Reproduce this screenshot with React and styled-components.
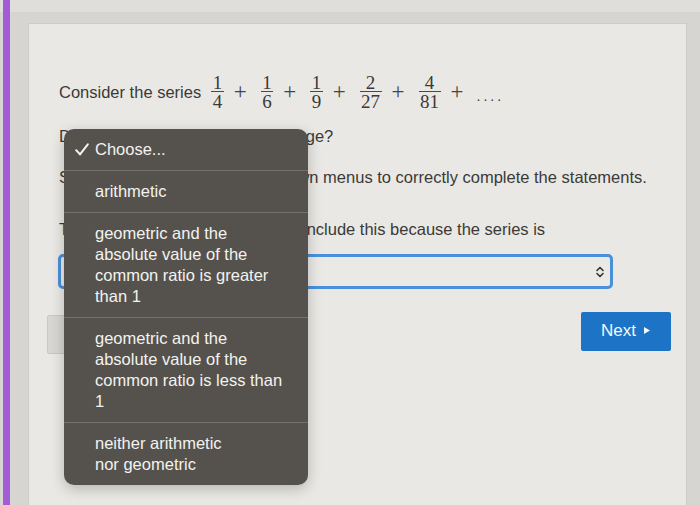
import React from "react";
import styled, { createGlobalStyle } from "styled-components";

const GlobalStyle = createGlobalStyle`
  html, body {
    margin: 0;
    padding: 0;
  }
  body {
    font-family: "Liberation Sans", Arial, Helvetica, sans-serif;
    background: #d5d4d0;
    color: #3b3a38;
  }
`;

const Page = styled.div`
  display: flex;
  height: 505px;
  overflow: hidden;
  background: linear-gradient(#dfdeda 0, #dfdeda 12px, #d6d5d1 12px, #d6d5d1 100%);
`;

const Stripe = styled.div`
  flex-shrink: 0;
  width: 7px;
  margin-left: 3px;
  background: #a45bd6;
`;

const Card = styled.main`
  position: relative;
  flex: 1;
  min-width: 0;
  margin: 23px 13px 0 18px;
  padding: 50px 15px 0 30px;
  background: #e9e8e4;
  border: 1px solid #cfcdc9;
  border-bottom: none;
  overflow: hidden;
`;

const QuestionRow = styled.div`
  display: flex;
  align-items: center;
  height: 36px;
  font-size: 16.5px;
`;

const Series = styled.span`
  display: inline-flex;
  align-items: center;
  margin-left: 10px;
  font-family: "Liberation Serif", "Times New Roman", serif;
`;

const Fraction = styled.span`
  display: inline-flex;
  flex-direction: column;
  align-items: center;
  font-size: 19px;
  line-height: 17px;
  color: #3b3a38;

  span {
    padding: 0 1.5px;
  }
  span + span {
    padding-top: 1px;
    border-top: 1px solid #4a4947;
  }
`;

const Plus = styled.span`
  font-size: 23px;
  line-height: 1;
  margin: 0 14px 2px 10px;
  color: #444;
`;

const Dots = styled.span`
  font-family: "Liberation Sans", Arial, sans-serif;
  font-size: 14px;
  letter-spacing: 3px;
  margin-left: -1px;
  padding-top: 8px;
`;

const Prompt = styled.p`
  margin: ${(p) => p.$top}px 0 0;
  font-size: 16.5px;
  line-height: 21px;
  white-space: nowrap;
`;

const Select = styled.div`
  display: flex;
  align-items: center;
  justify-content: flex-end;
  box-sizing: border-box;
  width: 555px;
  height: 35px;
  margin: 14px 0 0 -1px;
  padding-right: 5px;
  background: #ebe9e5;
  border: 3px solid #4b8fdb;
  border-radius: 5px;
`;

const ButtonRow = styled.div`
  display: flex;
  justify-content: space-between;
  align-items: flex-start;
  margin: 23px 0 0 -12px;
`;

const PrevButton = styled.button`
  width: 100px;
  height: 39px;
  margin-top: 3px;
  background: #d7d6d2;
  border: 1px solid #cac8c4;
  border-radius: 2px;
  color: #a2a09c;
  font-family: inherit;
  font-size: 16px;
`;

const NextButton = styled.button`
  display: flex;
  align-items: center;
  justify-content: center;
  gap: 7px;
  width: 90px;
  height: 39px;
  background: #1d74c7;
  border: none;
  border-radius: 2px;
  color: #f4f8fc;
  font-family: inherit;
  font-size: 17px;
  padding: 0 0 2px;
`;

const Menu = styled.ul`
  position: absolute;
  left: 35px;
  top: 105px;
  width: 244px;
  margin: 0;
  padding: 0;
  list-style: none;
  background: #55524e;
  border-radius: 10px;
  overflow: hidden;
  box-shadow: 0 4px 14px rgba(0, 0, 0, 0.22);
`;

const Option = styled.li`
  display: grid;
  grid-template-columns: 20px 198px;
  padding: 10px 13px 10px 11px;
  font-size: 16.5px;
  line-height: 21px;
  color: #f3f2ef;
  border-top: ${(p) => (p.$first ? "none" : "1px solid #75726e")};
`;

const OptionText = styled.span`
  text-wrap: ${(p) => (p.$balance ? "balance" : "wrap")};
`;

const CheckSlot = styled.span`
  display: flex;
  align-items: center;
`;

const Check = () => (
  <svg width="14" height="13" viewBox="0 0 14 13">
    <path d="M1.2 7.2 L5 11.4 L12.8 1.4" fill="none" stroke="#f5f4f1" strokeWidth="2" strokeLinecap="round" strokeLinejoin="round" />
  </svg>
);

const Chevrons = () => (
  <svg width="10" height="14" viewBox="0 0 10 14">
    <path d="M2 5.5 L5 2.5 L8 5.5 M2 8.5 L5 11.5 L8 8.5" fill="none" stroke="#333" strokeWidth="1.6" strokeLinecap="round" strokeLinejoin="round" />
  </svg>
);

const Triangle = () => (
  <svg width="8" height="9" viewBox="0 0 8 9">
    <path d="M1 1 L7 4.5 L1 8 Z" fill="#f4f8fc" />
  </svg>
);

const terms = [
  ["1", "4"],
  ["1", "6"],
  ["1", "9"],
  ["2", "27"],
  ["4", "81"],
];

const options = [
  { text: "arithmetic" },
  { text: "geometric and the absolute value of the common ratio is greater than 1" },
  { text: "geometric and the absolute value of the common ratio is less than 1" },
  { text: "neither arithmetic nor geometric", balance: true },
];

export default function App() {
  return (
    <>
      <GlobalStyle />
      <Page>
        <Stripe />
        <Card>
          <QuestionRow>
            Consider the series
            <Series>
              {terms.map(([n, d]) => (
                <React.Fragment key={n + d}>
                  <Fraction>
                    <span>{n}</span>
                    <span>{d}</span>
                  </Fraction>
                  <Plus>+</Plus>
                </React.Fragment>
              ))}
              <Dots>....</Dots>
            </Series>
          </QuestionRow>

          <Prompt $top={16}>Does the series converge or diverge?</Prompt>
          <Prompt $top={20}>
            Select answers from the drop-down menus to correctly complete the statements.
          </Prompt>
          <Prompt $top={31}>
            The series converges. You can conclude this because the series is
          </Prompt>

          <Select>
            <Chevrons />
          </Select>

          <ButtonRow>
            <PrevButton>Previous</PrevButton>
            <NextButton>
              Next <Triangle />
            </NextButton>
          </ButtonRow>

          <Menu>
            <Option $first>
              <CheckSlot>
                <Check />
              </CheckSlot>
              <span>Choose...</span>
            </Option>
            {options.map((o) => (
              <Option key={o.text}>
                <span />
                <OptionText $balance={o.balance}>{o.text}</OptionText>
              </Option>
            ))}
          </Menu>
        </Card>
      </Page>
    </>
  );
}
